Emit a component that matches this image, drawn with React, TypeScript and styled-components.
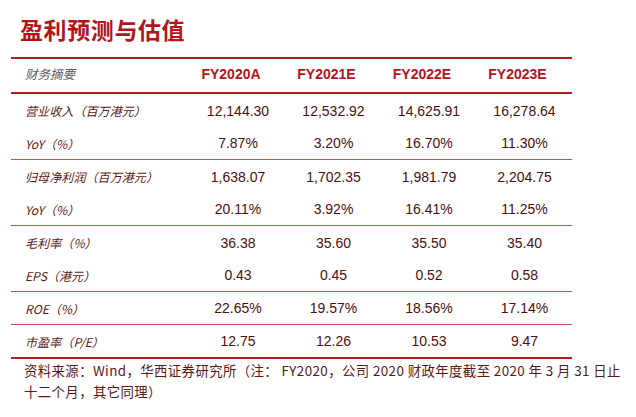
import React from "react";
import styled, { createGlobalStyle } from "styled-components";

const Global = createGlobalStyle`
  html, body { margin: 0; padding: 0; background: #ffffff; }
  body { font-family: "Liberation Sans", Arial, "Noto Sans CJK SC", sans-serif; }
`;

const Page = styled.div`
  width: 636px;
  height: 417px;
  padding: 14px 0 0 11px;
  box-sizing: border-box;
  background: #fff;
`;

const Title = styled.h1`
  margin: 0 0 13px 9px;
  height: 30px;
  line-height: 30px;
  font-family: "Noto Sans CJK SC", sans-serif;
  font-size: 23px;
  font-weight: 700;
  color: #b3141b;
  letter-spacing: 0.6px;
`;

const Table = styled.div`
  width: 561px;
  border-top: 2px solid #b31e23;
  border-bottom: 2px solid #b31e23;
`;

type RowProps = { $h: number; $line?: "thick" | "thin" | "none" };

const Row = styled.div<RowProps>`
  display: grid;
  grid-template-columns: 179px 96px 95px 96px 95px;
  height: ${(p) => p.$h}px;
  align-items: center;
  border-bottom: ${(p) =>
    p.$line === "thick"
      ? "2px solid #b31e23"
      : p.$line === "thin"
      ? "1px solid #c4504e"
      : "none"};
`;

const HeadLabel = styled.div`
  padding: 0 0 4px 14px;
  font-family: "Noto Sans CJK SC", sans-serif;
  font-style: italic;
  font-size: 12.5px;
  color: #5b5b5b;
`;

const HeadCell = styled.div`
  padding: 0 14px 4px 0;
  text-align: center;
  font-family: "Liberation Sans", Arial, sans-serif;
  font-weight: 700;
  font-size: 14px;
  color: #b3141b;
`;

const Label = styled.div`
  padding-left: 14px;
  font-family: "Noto Sans CJK SC", sans-serif;
  font-style: italic;
  font-size: 12.1px;
  color: #5a1818;
  white-space: nowrap;
`;

const Num = styled.div`
  text-align: center;
  font-family: "Liberation Sans", Arial, sans-serif;
  font-size: 14px;
  color: #4a1012;
`;

const Footer = styled.div`
  margin-top: 1px;
  padding-left: 13px;
  font-family: "Noto Sans CJK SC", sans-serif;
  font-size: 13.4px;
  line-height: 21px;
  color: #5a1818;
  white-space: nowrap;
`;

const Line = styled.div`
  letter-spacing: 0.4px;
`;

type Data = {
  label: string;
  values: string[];
  h: number;
  line: "thick" | "thin" | "none";
};

const rows: Data[] = [
  { label: "营业收入（百万港元）", values: ["12,144.30", "12,532.92", "14,625.91", "16,278.64"], h: 33, line: "none" },
  { label: "YoY（%）", values: ["7.87%", "3.20%", "16.70%", "11.30%"], h: 32, line: "thin" },
  { label: "归母净利润（百万港元）", values: ["1,638.07", "1,702.35", "1,981.79", "2,204.75"], h: 33, line: "none" },
  { label: "YoY（%）", values: ["20.11%", "3.92%", "16.41%", "11.25%"], h: 32, line: "thin" },
  { label: "毛利率（%）", values: ["36.38", "35.60", "35.50", "35.40"], h: 33, line: "none" },
  { label: "EPS（港元）", values: ["0.43", "0.45", "0.52", "0.58"], h: 32, line: "thin" },
  { label: "ROE（%）", values: ["22.65%", "19.57%", "18.56%", "17.14%"], h: 32, line: "thin" },
  { label: "市盈率（P/E）", values: ["12.75", "12.26", "10.53", "9.47"], h: 32, line: "none" },
];

const years = ["FY2020A", "FY2021E", "FY2022E", "FY2023E"];

export default function App() {
  return (
    <>
      <Global />
      <Page>
        <Title>盈利预测与估值</Title>
        <Table>
          <Row $h={33} $line="thick">
            <HeadLabel>财务摘要</HeadLabel>
            {years.map((y) => (
              <HeadCell key={y}>{y}</HeadCell>
            ))}
          </Row>
          {rows.map((r, i) => (
            <Row key={i} $h={r.h} $line={r.line}>
              <Label>{r.label}</Label>
              {r.values.map((v, j) => (
                <Num key={j}>{v}</Num>
              ))}
            </Row>
          ))}
        </Table>
        <Footer>
          <Line>资料来源：Wind，华西证券研究所（注： FY2020，公司 2020 财政年度截至 2020 年 3 月 31 日止</Line>
          <Line>十二个月，其它同理）</Line>
        </Footer>
      </Page>
    </>
  );
}
